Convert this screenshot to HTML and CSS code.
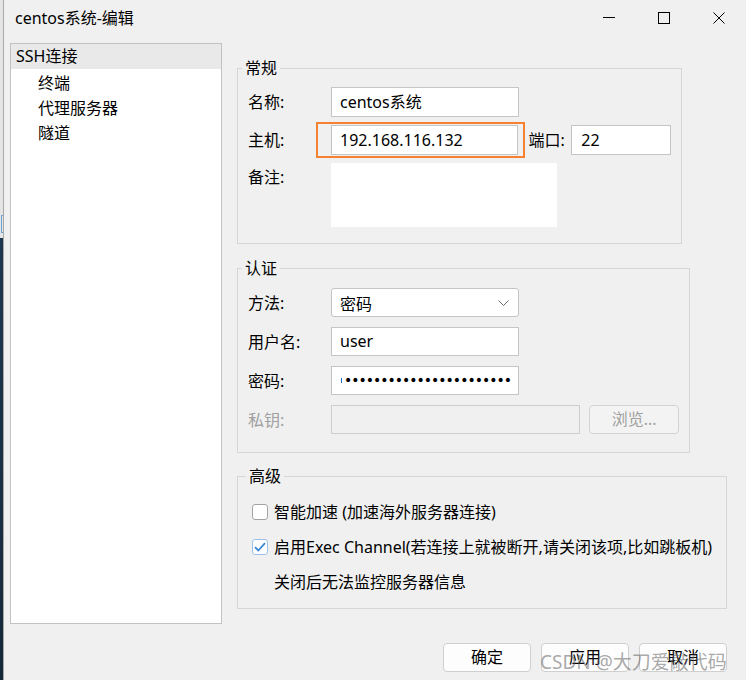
FILE: index.html
```html
<!DOCTYPE html>
<html lang="zh-CN">
<head>
<meta charset="utf-8">
<title>centos系统-编辑</title>
<link rel="stylesheet" href="styles.css">
</head>
<body>
<div class="screen">
  <div class="desk">
    <div class="desk-top"><span class="desk-blue"></span></div>
    <div class="desk-bottom"></div>
  </div>
  <div class="dialog">
    <header class="titlebar">
      <span class="title">centos系统-编辑</span>
      <div class="controls">
        <span class="ctl"><svg width="12" height="12" viewBox="0 0 12 12"><path d="M0 5.5H12" stroke="#000" stroke-width="1"/></svg></span>
        <span class="ctl"><svg width="12" height="12" viewBox="0 0 12 12"><rect x="0.5" y="0.5" width="11" height="11" fill="none" stroke="#000" stroke-width="1"/></svg></span>
        <span class="ctl"><svg width="12" height="12" viewBox="0 0 12 12"><path d="M0.5 0.5L11.5 11.5M11.5 0.5L0.5 11.5" stroke="#000" stroke-width="1"/></svg></span>
      </div>
    </header>
    <div class="main">
      <ul class="tree">
        <li class="tree-item selected">SSH连接</li>
        <li class="tree-item child">终端</li>
        <li class="tree-item child">代理服务器</li>
        <li class="tree-item child">隧道</li>
      </ul>
      <div class="panes">
        <fieldset class="group general">
          <legend>常规</legend>
          <div class="row">
            <span class="lbl">名称:</span>
            <div class="input w188">centos系统</div>
          </div>
          <div class="row">
            <span class="lbl">主机:</span>
            <div class="input w188 host">192.168.116.132<span class="mark"></span></div>
            <span class="lbl-port">端口:</span>
            <div class="input port">22</div>
          </div>
          <div class="row row-note">
            <span class="lbl">备注:</span>
            <div class="textarea"></div>
          </div>
        </fieldset>

        <fieldset class="group auth">
          <legend>认证</legend>
          <div class="row">
            <span class="lbl">方法:</span>
            <div class="select">
              <span>密码</span>
              <svg width="11" height="6" viewBox="0 0 11 6"><path d="M0.5 0.5L5.5 5.5L10.5 0.5" fill="none" stroke="#6b6b6b" stroke-width="1"/></svg>
            </div>
          </div>
          <div class="row">
            <span class="lbl">用户名:</span>
            <div class="input w188 h29">user</div>
          </div>
          <div class="row">
            <span class="lbl">密码:</span>
            <div class="input w188 h29 pwd"><span class="caret"></span><span class="dots">•••••••••••••••••••••••</span></div>
          </div>
          <div class="row">
            <span class="lbl disabled">私钥:</span>
            <div class="input key h29"></div>
            <button class="browse" type="button">浏览...</button>
          </div>
        </fieldset>

        <fieldset class="group adv">
          <legend>高级</legend>
          <div class="crow">
            <span class="cbox"></span>
            <span>智能加速 (加速海外服务器连接)</span>
          </div>
          <div class="crow">
            <span class="cbox checked"><svg width="12" height="10" viewBox="0 0 12 10"><path d="M1 5.2L4.3 8.5L11 1.2" fill="none" stroke="#3a86d8" stroke-width="1.8"/></svg></span>
            <span>启用Exec Channel(若连接上就被断开,请关闭该项,比如跳板机)</span>
          </div>
          <div class="crow indent">
            <span>关闭后无法监控服务器信息</span>
          </div>
        </fieldset>
      </div>
    </div>
    <footer class="footer">
      <button class="btn" type="button">确定</button>
      <button class="btn" type="button">应用</button>
      <button class="btn" type="button">取消</button>
    </footer>
  </div>
  <div class="watermark">CSDN @大刀爱敲代码</div>
</div>
</body>
</html>
```

FILE: styles.css
```css
* { box-sizing: border-box; }
html, body { margin: 0; padding: 0; }
body {
  width: 746px;
  height: 680px;
  overflow: hidden;
  background: #f0f0f0;
  font-family: "Noto Sans", "Noto Sans CJK SC", sans-serif;
  font-size: 16px;
  color: #000;
}
.screen { display: flex; height: 680px; position: relative; }

.desk { width: 3px; display: flex; flex-direction: column; }
.desk-top {
  height: 238px;
  background: #e4e4e4;
  display: flex;
  flex-direction: column;
  justify-content: flex-end;
  padding-bottom: 5px;
}
.desk-blue { display: block; height: 18px; margin-left: 1px; border: 1px solid #6aa2d8; border-right: 0; }
.desk-bottom { flex: 1; background: linear-gradient(#1d3850, #15283a); }

.dialog {
  flex: 1;
  border-left: 1px solid #a8a8a8;
  display: flex;
  flex-direction: column;
  background: #f0f0f0;
}
.titlebar { height: 36px; display: flex; align-items: center; padding-left: 11px; }
.title { line-height: 20px; }
.controls { margin-left: auto; display: flex; height: 36px; }
.ctl { width: 55px; height: 36px; display: flex; align-items: center; justify-content: center; }
.ctl svg { display: block; }

.main { display: flex; padding: 7px 0 0 6px; gap: 15px; }
.tree {
  width: 212px;
  height: 581px;
  border: 1px solid #c2c2c2;
  background: #fff;
  margin: 0;
  padding: 0;
  list-style: none;
  flex: none;
}
.tree-item { height: 25px; line-height: 25px; padding-left: 5px; }
.tree-item.selected { background: #e9e9e9; margin-bottom: 2px; }
.tree-item.child { padding-left: 27px; }

.panes { display: flex; flex-direction: column; padding-top: 15px; }
.group {
  margin: 0;
  border: 1px solid #d6d6d6;
  min-width: 0;
  padding: 9px 10px 16px;
}
.group legend { padding: 0 3px; margin-left: -6px; line-height: 20px; }
.general { width: 445px; }
.auth { width: 453px; margin-top: 14px; padding-top: 10px; padding-bottom: 18px; }
.adv { width: 490px; margin-top: 13px; padding: 8px 10px 9px 14px; }

.row { display: flex; align-items: center; }
.general .row + .row { margin-top: 8px; }
.auth .row + .row { margin-top: 10px; }
.lbl { width: 83px; flex: none; line-height: 20px; }
.lbl.disabled { color: #a0a0a0; }
.input {
  height: 30px;
  border: 1px solid #c5c5c5;
  background: #fff;
  padding: 0 8px;
  line-height: 28px;
  white-space: nowrap;
}
.input.h29 { height: 29px; line-height: 27px; }
.w188 { width: 188px; }
.host { position: relative; }
.mark {
  position: absolute;
  left: -16px;
  top: -4px;
  width: 209px;
  height: 36px;
  border: 2px solid #f4822e;
}
.lbl-port { margin-left: 10px; width: 43px; line-height: 20px; }
.port { width: 100px; padding-left: 9px; }
.row-note { align-items: flex-start; }
.row-note .lbl { margin-top: 4px; }
.textarea { width: 226px; height: 64px; background: #fff; }

.select {
  width: 188px;
  height: 29px;
  border: 1px solid #c5c5c5;
  border-radius: 3px;
  background: #fff;
  display: flex;
  align-items: center;
  justify-content: space-between;
  padding: 0 9px 0 8px;
}
.select svg { display: block; }

.pwd { display: flex; align-items: center; padding-left: 9px; overflow: hidden; }
.caret { width: 1px; height: 5px; background: #1e6fc8; margin-right: 2px; flex: none; }
.dots { font-family: "DejaVu Sans", sans-serif; font-size: 14px; letter-spacing: -1px; line-height: 27px; }

.key { width: 250px; background: #f0f0f0; border-color: #cdcdcd; }
.browse {
  margin-left: 9px;
  width: 90px;
  height: 29px;
  border: 1px solid #d3d3d3;
  border-radius: 4px;
  background: #f3f3f3;
  color: #a0a0a0;
  font: inherit;
  padding: 0;
  line-height: 27px;
}

.crow { display: flex; align-items: center; height: 35px; gap: 6px; line-height: 20px; white-space: nowrap; }
.crow.indent { padding-left: 22px; }
.cbox {
  width: 16px;
  height: 16px;
  border: 1px solid #a3a3a3;
  border-radius: 3px;
  background: #fff;
  flex: none;
  display: flex;
  align-items: center;
  justify-content: center;
}
.cbox.checked { border-color: #9cc0e8; }
.cbox svg { display: block; }

.footer {
  margin-top: 19px;
  display: flex;
  justify-content: flex-end;
  gap: 10px;
  padding-right: 19px;
}
.btn {
  width: 88px;
  height: 29px;
  border: 1px solid #cfcfcf;
  border-radius: 4px;
  background: #fdfdfd;
  font: inherit;
  color: #000;
  padding: 0;
  line-height: 27px;
}

.watermark {
  position: absolute;
  left: 540px;
  top: 650px;
  font-size: 19px;
  line-height: 24px;
  color: rgba(95, 95, 95, 0.55);
  white-space: nowrap;
}
```
